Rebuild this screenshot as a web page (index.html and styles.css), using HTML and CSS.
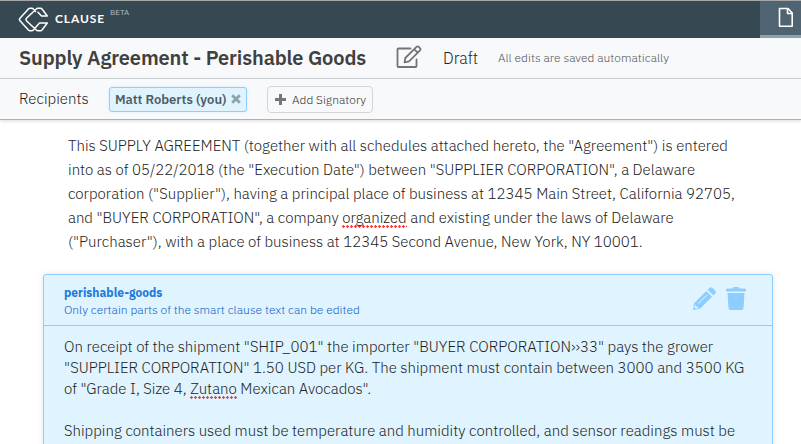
FILE: index.html
```html
<!DOCTYPE html>
<html lang="en">
<head>
<meta charset="utf-8">
<title>Clause</title>
<link rel="stylesheet" href="styles.css">
</head>
<body>
<header class="topbar">
  <svg class="logo" width="31" height="26" viewBox="0 0 31 26" fill="none" stroke="#fff" stroke-width="1.5" stroke-linejoin="round" stroke-linecap="round"><path d="M17.500 4.500L15.300 1.900q-.5-.6-1.300-.6H12q-.9 0-1.600.7L2.200 10.900q-1.500 1.600 0 3.200l8.200 8.900q.7.700 1.600.7h2q.8 0 1.300-.6L21.500 16h7.800L24 23q-.6.700-1.500.7h-2.700q-.9 0-1.500-.7l-9.600-9q-1.400-1.500 0-3L18.300 2q.6-.7 1.500-.7h2.700q.9 0 1.500.7L29.300 9h-5.800L20 5.200"/></svg>
  <span class="brand">CLAUSE</span>
  <span class="beta">BETA</span>
  <div class="doc-tab"><svg width="16" height="21" viewBox="0 0 16 21" fill="none" stroke="#fff" stroke-width="1.6" stroke-linejoin="round"><path d="M1.500 1.500h8.500l4.200 4.500v13.200H1.500z"/><path d="M9.500 1.500v5h5"/></svg></div>
</header>
<section class="titlebar">
  <h1 class="title">Supply Agreement - Perishable Goods</h1>
  <svg class="edit" width="27" height="24" viewBox="0 0 27 24" fill="none" stroke="#747474" stroke-width="1.800" stroke-linejoin="round" stroke-linecap="round"><path d="M14.500 3.500H2.500Q1.500 3.500 1.500 4.500v16.500q0 1 1 1h17q1 0 1-1V14.500"/><path d="M8.500 17.300l.8-4.300L20.500 1.900q1-1 2.200 0l1.300 1.300q1 1 0 2.200L13 16.300zM18.300 4.300l3.400 3.400"/></svg>
  <span class="status">Draft</span>
  <span class="saved">All edits are saved automatically</span>
</section>
<section class="recipients">
  <span class="label">Recipients</span>
  <span class="chip"><b class="name">Matt Roberts (you)</b><svg width="10" height="10" viewBox="0 0 10 10" stroke="#8fa3ad" stroke-width="2.800"><path d="M1.200 1.200l7.600 7.600M8.800 1.200L1.200 8.800"/></svg></span>
  <button class="add"><svg width="11" height="11" viewBox="0 0 11 11" stroke="#777" stroke-width="3"><path d="M5.500 0v11M0 5.500h11"/></svg><span class="add-text">Add Signatory</span></button>
</section>
<main class="document">
  <p class="intro"><span class="line">This SUPPLY AGREEMENT (together with all schedules attached hereto, the "Agreement") is entered</span>
  <span class="line">into as of 05/22/2018 (the "Execution Date") between "SUPPLIER CORPORATION", a Delaware</span>
  <span class="line">corporation ("Supplier"), having a principal place of business at 12345 Main Street, California 92705,</span>
  <span class="line">and "BUYER CORPORATION", a company <span class="typo">organized</span> and existing under the laws of Delaware</span>
  <span class="line">("Purchaser"), with a place of business at 12345 Second Avenue, New York, NY 10001.</span></p>
  <article class="clause">
    <header class="clause-head">
      <div class="clause-titles"><strong class="clause-name">perishable-goods</strong><span class="clause-note">Only certain parts of the smart clause text can be edited</span></div>
      <svg width="23" height="23" viewBox="0 0 23 23" fill="#8fcdff"><path d="M0 23l1.300-7L13.300 4l5.700 5.700L7 21.700zM14.600 2.700L16.700.8q1.300-1.200 2.700 0l2.900 2.900q1.200 1.300 0 2.700l-2 2z"/><path d="M5.500 16.500L14.300 7.700" stroke="#dff4ff" stroke-width="1"/><path d="M2.300 17.500l1 2 2 .7-.2 1-2.500.4-1-1z" fill="#dff4ff"/></svg>
      <svg class="trash" width="20" height="23" viewBox="0 0 20 23" fill="#8fcdff"><path d="M6.500 1.500Q6.700 0 8 0h4q1.300 0 1.500 1.500h5q1.500 0 1.500 1.500v1.500H0V3q0-1.500 1.500-1.500zM1.500 6h17l-1 15q-.2 2-2 2h-11q-1.800 0-2-2z"/></svg>
    </header>
    <div class="clause-body"><span class="line">On receipt of the shipment "SHIP_001" the importer "BUYER CORPORATION››33" pays the grower</span>
    <span class="line">"SUPPLIER CORPORATION" 1.50 USD per KG. The shipment must contain between 3000 and 3500 KG</span>
    <span class="line">of "Grade I, Size 4, <span class="typo">Zutano</span> Mexican Avocados".</span>
    <span class="line next">Shipping containers used must be temperature and humidity controlled, and sensor readings must be</span></div>
  </article>
</main>
</body>
</html>
```
FILE: styles.css
```css
* { box-sizing: border-box; }
body { margin: 0; height: 444px; overflow: hidden; background: #fff; color: #222; font-family: "IBM Plex Sans", Roboto, sans-serif; font-size: 15px; font-weight: 300; white-space: nowrap; }
svg { flex: none; display: block; }
.topbar { display: flex; height: 38px; border-top: 1px solid #a5a7a9; background: #364852; padding-left: 18px; color: #fff; }
.logo { margin-top: 6px; }
.brand { margin: 10px 0 0 6px; font: 700 12px/16px Lato, sans-serif; letter-spacing: .9px; }
.beta { margin: 5px 0 0 5px; font-size: 8px; line-height: 12px; color: #b5bdc2; font-weight: 400; }
.doc-tab { margin-left: auto; width: 41px; background: #4f6371; border-bottom: 3px solid #8ba2b1; padding: 6px 0 0 18px; }
.titlebar { display: flex; align-items: center; height: 41px; background: #f8f9fb; border-bottom: 1px solid #d3d6d9; padding: 0 0 1px 19px; }
.title { margin: 0; width: 348px; font-size: 20px; line-height: 26px; font-weight: 600; letter-spacing: -.12px; color: #404040; }
.edit { margin: 0 0 1px 29px; }
.status { width: 35px; margin-left: 20px; font-size: 16px; }
.saved { margin-left: 20px; font-size: 12px; color: #555; }
.recipients { position: relative; display: flex; align-items: center; height: 41px; background: #f8f9fb; border-bottom: 1px solid #acb1b5; box-shadow: 0 1px 4px rgba(0,0,0,.15); padding-left: 19px; }
.label { width: 70px; padding-bottom: 1px; }
.chip { display: flex; align-items: center; justify-content: space-between; width: 138px; margin-left: 20px; height: 25px; padding: 0 5px; border: 1px solid #8fcdff; border-radius: 3px; background: #dff4ff; box-shadow: 0 0 3px rgba(143,205,255,.3); }
.name { font-size: 13px; font-weight: 600; color: #505c64; }
.add { display: flex; align-items: center; gap: 6px; width: 106px; margin-left: 20px; height: 27px; padding: 0 7px; border: 1px solid #d3d6d9; border-radius: 4px; background: #f8f9fb; font-family: inherit; }
.add-text { font-size: 12px; font-weight: 300; color: #333; }
.intro { margin: 14px 0 0 68px; line-height: 24px; }
.line { display: block; }
.typo { padding-bottom: 1px; background: radial-gradient(circle at 1.5px 1.5px, #f2403c 1px, transparent 1.5px) left bottom / 4px 3px repeat-x; }
.clause { height: 190px; margin: 20px 28px 0 43px; border: 1px solid #8fcdff; border-radius: 3px; background: #dff4ff; box-shadow: 0 0 6px rgba(0,0,0,.1); }
.clause-head { display: flex; height: 51px; border-bottom: 1px solid #8fcdff; padding: 12px 26px 0 20px; }
.clause-titles { display: flex; flex-direction: column; align-items: flex-start; margin-right: auto; font-size: 12px; line-height: 17px; color: #2478da; }
.clause-name { margin-top: -3px; font-weight: 700; }
.clause-note { color: #1560c4; }
.trash { margin-left: 10px; }
.clause-body { padding: 10px 20px; line-height: 21px; }
.next { margin-top: 21px; }
```
